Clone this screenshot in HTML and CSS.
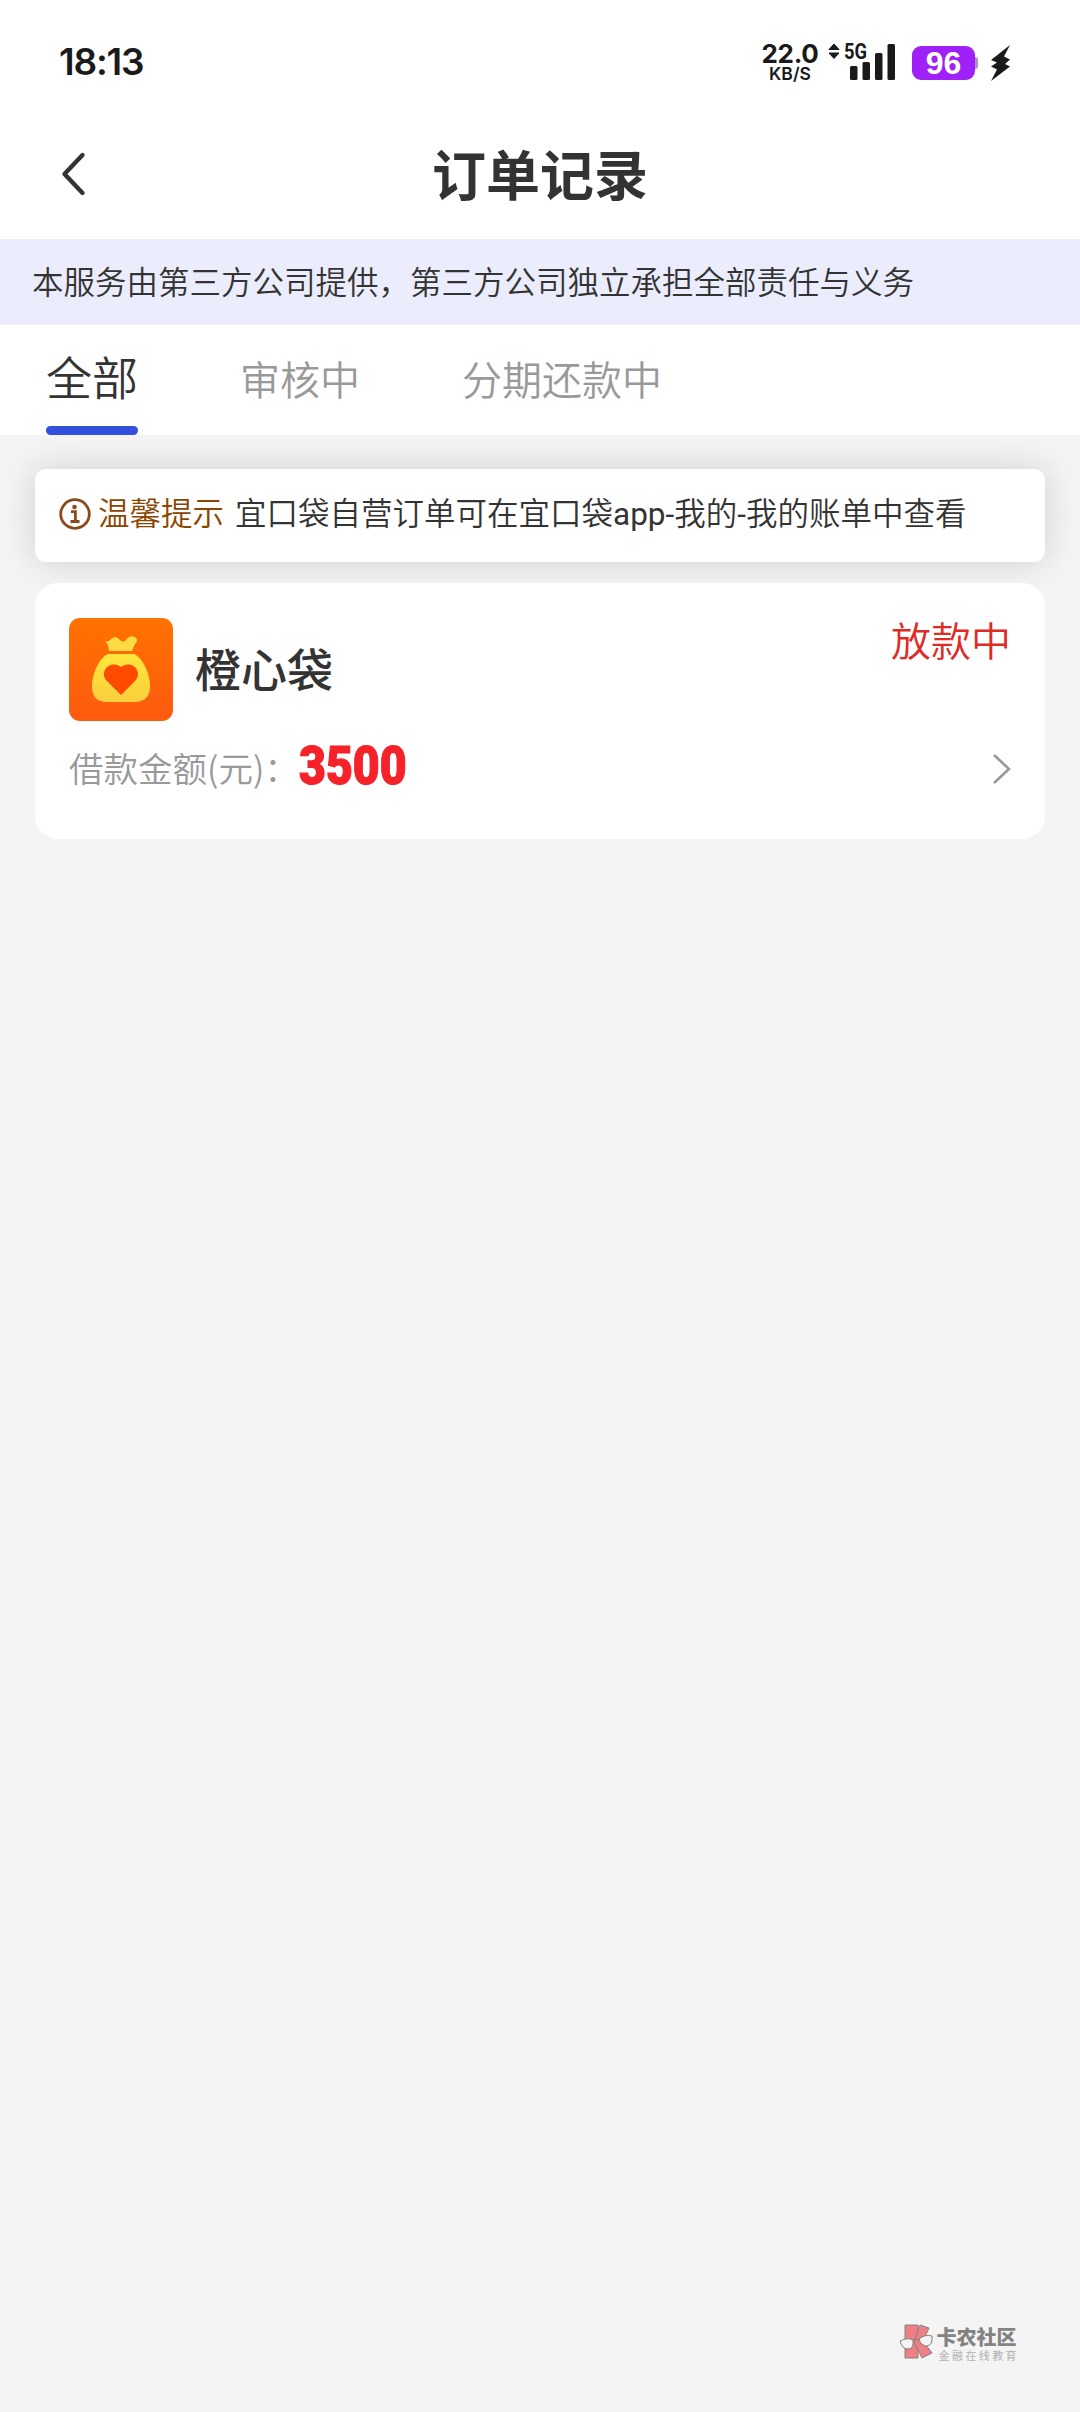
FILE: index.html
```html
<!DOCTYPE html>
<html lang="zh-CN">
<head>
<meta charset="utf-8">
<title>订单记录</title>
<link rel="stylesheet" href="styles.css">
</head>
<body>
<header class="statusbar">
  <span class="clock">18:13</span>
  <div class="indicators">
    <div class="speed"><span class="rate">22.0</span><span class="unit">KB/S</span></div>
    <svg class="signal" width="68" height="40" viewBox="0 0 68 40">
      <path d="M2 9.500 7 4l5 5.500zM2 13l5 5.500L12 13z" fill="#1a1a1a" stroke="#1a1a1a" stroke-linejoin="round"/>
      <text x="17" y="19" class="net" textLength="23" lengthAdjust="spacingAndGlyphs">5G</text>
      <g fill="#1a1a1a"><rect x="23" y="26" width="7.500" height="14" rx="1.500"/><rect x="35.500" y="22" width="7.500" height="18" rx="1.500"/><rect x="48" y="13" width="7.500" height="27" rx="1.500"/><rect x="60.500" y="4" width="7.500" height="36" rx="1.500"/></g>
    </svg>
    <div class="battery">96</div>
    <svg class="bolt" width="21" height="38" viewBox="0 0 21 38"><path d="M20 1 1 16l6 2.500L1 22.500l6 3L1 37l19-14.500-5-2.500 5-4.500-6-3z" fill="#1a1a1a"/></svg>
  </div>
</header>
<nav class="titlebar">
  <svg class="back" width="24" height="44" viewBox="0 0 24 44"><path d="M20.500 2 2.500 21l18 19" fill="none" stroke="#333" stroke-width="4.400" stroke-linecap="round" stroke-linejoin="round"/></svg>
  <h1>订单记录</h1>
</nav>
<p class="banner">本服务由第三方公司提供，第三方公司独立承担全部责任与义务</p>
<div class="tabs">
  <a class="tab active">全部</a>
  <a class="tab">审核中</a>
  <a class="tab">分期还款中</a>
</div>
<main>
  <section class="notice">
    <svg class="info" width="32" height="32" viewBox="0 0 32 32"><circle cx="16" cy="15" r="14.300" fill="none" stroke="#8c4a1c" stroke-width="2.800"/><circle cx="15.500" cy="8" r="2.300" fill="#8c4a1c"/><path d="M12 12.700h4.400v9.700M11.500 22.500h9" fill="none" stroke="#8c4a1c" stroke-width="2.800"/></svg>
    <strong>温馨提示</strong>
    <p>宜口袋自营订单可在宜口袋<span class="latin">app-</span>我的<span class="latin">-</span>我的账单中查看</p>
  </section>
  <section class="order">
    <div class="order-head">
      <svg class="logo" width="104" height="103" viewBox="0 0 104 103">
        <defs>
          <linearGradient id="bg" x1="0" y1="0" x2="0" y2="1"><stop offset="0" stop-color="#ff7200"/><stop offset="1" stop-color="#ff5a10"/></linearGradient>
          <linearGradient id="bag" x1="0" y1="0" x2="0" y2="1"><stop offset="0" stop-color="#ffe63c"/><stop offset="1" stop-color="#f9cf3d"/></linearGradient>
        </defs>
        <rect width="104" height="103" rx="11" fill="url(#bg)"/>
        <path d="M36 23c2 1 4 0 6-2 3-3 7-2 9 1 2 2 4 2 6 0 2-4 7-5 10-2 2 2 1 4-1 6l-3 7H40l-1-6z" fill="#ffdc45"/>
        <path d="M39 36h26c8 3 16 19 16 32 0 11-6 16-15 16H38c-10 0-15-5-15-16 0-13 8-29 16-32z" fill="url(#bag)"/>
        <path d="M52 77 38 63c-9-10 4-22 14-14 10-8 23 4 14 14z" fill="#ff4b00"/>
      </svg>
      <h2>橙心袋</h2>
      <span class="state">放款中</span>
    </div>
    <div class="order-row">
      <span class="label">借款金额(元)：</span>
      <b class="amount">3500</b>
      <svg class="more" width="20" height="32" viewBox="0 0 20 32"><path d="m3 2 15 14L3 30" fill="none" stroke="#999" stroke-width="2.600"/></svg>
    </div>
  </section>
</main>
<footer class="mark">
  <svg width="36" height="38" viewBox="0 0 36 38">
    <g fill="#ee737a" stroke="#777" stroke-width="1"><path d="M6 1h13v33H6z"/><path d="m21 1 9 3-6 13 9 12-10 5-8-16z"/></g>
    <g fill="#f4f4f4" stroke="#777"><path d="M1 17q8-4 13-1 1 9-5 9-6 0-8-8zM20 15q6-5 13-3 1 9-5 10-6 0-8-7z"/><path d="m14 16 6-1"/></g>
  </svg>
  <div class="mark-text"><b>卡农社区</b><small>金融在线教育</small></div>
</footer>
</body>
</html>
```
FILE: styles.css
```css
* { box-sizing: border-box; margin: 0; padding: 0; }
body {
  display: flex;
  flex-direction: column;
  width: 1080px;
  height: 2412px;
  background: #f4f4f4;
  color: #333;
  font-family: "Noto Sans CJK SC", sans-serif;
  overflow: hidden;
  white-space: nowrap;
}
svg { display: block; flex: none; overflow: visible; }

.statusbar {
  display: flex;
  justify-content: space-between;
  height: 110px;
  padding: 40px 69px 0 59px;
  background: #fff;
  color: #1a1a1a;
  font-family: Inter, sans-serif;
}
.clock { font-size: 37px; font-weight: 600; line-height: 44px; letter-spacing: -1.200px; }
.indicators { display: flex; }
.speed { display: flex; flex-direction: column; align-items: center; width: 58px; margin-right: 8px; }
.rate { font-size: 26px; font-weight: 700; line-height: 27px; letter-spacing: -.3px; }
.unit { font-size: 17.500px; font-weight: 600; line-height: 13px; }
.net { font: 700 22px Roboto, sans-serif; fill: #1a1a1a; }
.battery {
  position: relative;
  width: 63px;
  height: 34px;
  margin: 6px 15px 0 17px;
  border-radius: 9px;
  background: #a020fa;
  color: #fff;
  font: 700 32px/35px "Liberation Sans", sans-serif;
  text-align: center;
}
.battery::after {
  content: "";
  position: absolute;
  top: 11px;
  right: -3px;
  width: 3px;
  height: 12px;
  border-radius: 0 3px 3px 0;
  background: #b48ccb;
}
.bolt { margin-top: 4px; }

.titlebar {
  display: grid;
  grid-template-columns: 100px 1fr 100px;
  align-items: center;
  height: 129px;
  background: #fff;
}
.back { margin-left: 62px; }
.titlebar h1 { padding-bottom: 4px; font-size: 54px; font-weight: 700; line-height: 80px; text-align: center; }

.banner {
  height: 86px;
  padding-left: 32px;
  background: #ebedfd;
  font-size: 31.500px;
  font-weight: 350;
  line-height: 83px;
}

.tabs {
  position: relative;
  z-index: 1;
  display: flex;
  gap: 102px;
  height: 110px;
  padding-left: 46px;
  background: #fff;
}
.tab { font-size: 40px; font-weight: 350; line-height: 106px; color: #999; }
.tab.active {
  display: flex;
  flex-direction: column;
  justify-content: space-between;
  width: 92px;
  font-size: 46px;
  line-height: 101px;
  color: #333;
}
.tab.active::after { content: ""; height: 9px; border-radius: 5px; background: #3350dc; }

main { display: flex; flex-direction: column; gap: 21px; padding: 34px 35px 0; }
.notice {
  display: flex;
  align-items: center;
  height: 93px;
  padding: 0 0 2px 24px;
  border-radius: 11px;
  background: #fff;
  box-shadow: 0 0 36px rgba(0, 0, 0, .15);
  font-family: Roboto, "Noto Sans CJK SC", sans-serif;
  font-size: 31.500px;
  font-weight: 350;
  line-height: 46px;
}
.info { margin-top: 1px; }
.notice strong { margin: 0 11px 0 7px; font-weight: 350; color: #8a4500; }
.latin { font-weight: 400; }

.order {
  height: 256px;
  padding: 35px 34px 0;
  border-radius: 23px;
  background: #fff;
}
.order-head { display: flex; height: 103px; }
.order h2 { margin-left: 22px; font-size: 46px; font-weight: 500; line-height: 98px; }
.state { margin-left: auto; font-size: 40px; font-weight: 350; line-height: 43px; color: #e02a26; }
.order-row { display: flex; align-items: center; height: 95px; }
.label { width: 230px; padding-bottom: 4px; font-size: 34.500px; font-weight: 350; color: #999; }
.amount {
  padding-bottom: 5px;
  font: 900 54px/60px Roboto, sans-serif;
  color: #f5222a;
  -webkit-text-stroke: 1.200px #f5222a;
  transform: scaleX(.86);
  transform-origin: left;
}
.more { margin-left: auto; }

.mark { display: flex; gap: 2px; margin: auto 61px 50px auto; opacity: .9; }
.mark-text { display: flex; flex-direction: column; color: #777; }
.mark b { font-size: 20px; font-weight: 900; line-height: 25px; }
.mark small { padding-left: 2px; font-size: 11px; line-height: 12px; letter-spacing: 2.400px; color: #aaa; }
```
